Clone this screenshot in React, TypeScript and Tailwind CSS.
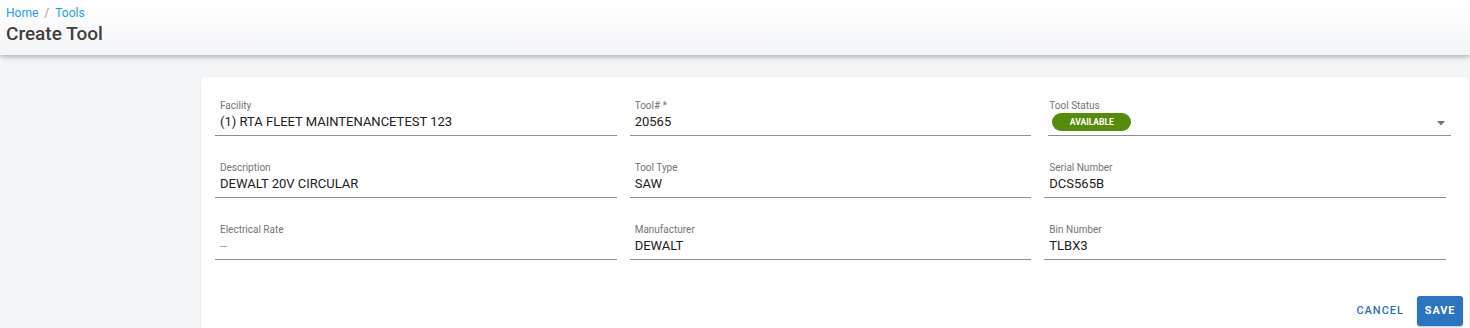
import React from "react";

function Field({ label, value, muted }: { label: string; value: string; muted?: boolean }) {
  return (
    <div className="border-b border-[#8f8f8f] pb-[4px]">
      <div className="pl-[5px] text-[10px] leading-[12px] text-[#757575]">{label}</div>
      <div className={"mt-[1px] pl-[5px] text-[13px] leading-[18px] " + (muted ? "text-[#9e9e9e]" : "text-[#212121]")}>{value}</div>
    </div>
  );
}

export default function App() {
  return (
    <div className="min-h-[328px] bg-[#f4f5f7] font-['Roboto',sans-serif] overflow-hidden">
      <div className="relative z-10 h-[55px] bg-gradient-to-b from-white to-[#f4f5f8] px-[6px] pt-[6px] shadow-[0_2px_5px_rgba(0,0,0,0.28)]">
        <div className="flex items-center text-[12px] leading-[15px] text-[#1fa0e6]">
          <span>Home</span>
          <span className="mx-[6px] text-[#9e9e9e]">/</span>
          <span>Tools</span>
        </div>
        <div className="mt-[1px] text-[19px] leading-[24px] font-medium text-[#404040]">Create Tool</div>
      </div>
      <div className="pl-[201px] pr-[1px] pt-[22px]">
        <div className="rounded-[4px] bg-white shadow-[0_1px_3px_rgba(0,0,0,0.08)] pl-[14px] pr-[23px] pt-[23px] pb-[10px]">
          <div className="grid grid-cols-3 gap-x-[13px] gap-y-[26px]">
            <Field label="Facility" value="(1) RTA FLEET MAINTENANCETEST 123" />
            <Field label="Tool# *" value="20565" />
            <div className="ml-[4px] -mr-[5px] border-b border-[#8f8f8f] pb-[4px]">
              <div className="pl-[1px] text-[10px] leading-[12px] text-[#757575]">Tool Status</div>
              <div className="mt-[1px] flex h-[18px] items-center justify-between">
                <span className="ml-[4px] flex h-[18px] w-[79px] items-center justify-center rounded-full bg-[#568b0c] text-[8.5px] font-bold text-white">AVAILABLE</span>
                <svg width="8" height="5" viewBox="0 0 8 5" className="mr-[6px] mt-[2px]">
                  <path d="M0 0 L8 0 L4 4.5 Z" fill="#757575" />
                </svg>
              </div>
            </div>
            <Field label="Description" value="DEWALT 20V CIRCULAR" />
            <Field label="Tool Type" value="SAW" />
            <Field label="Serial Number" value="DCS565B" />
            <Field label="Electrical Rate" value="--" muted />
            <Field label="Manufacturer" value="DEWALT" />
            <Field label="Bin Number" value="TLBX3" />
          </div>
          <div className="mt-[36px] flex items-center justify-end gap-[13px] -mr-[17px]">
            <button className="text-[11px] font-medium tracking-[1px] text-[#2f6fb8]">CANCEL</button>
            <button className="h-[30px] w-[46px] rounded-[3px] bg-[#2a74c0] text-[11px] font-bold tracking-[0.8px] text-white shadow-[0_1px_2px_rgba(0,0,0,0.25)]">SAVE</button>
          </div>
        </div>
      </div>
    </div>
  );
}
